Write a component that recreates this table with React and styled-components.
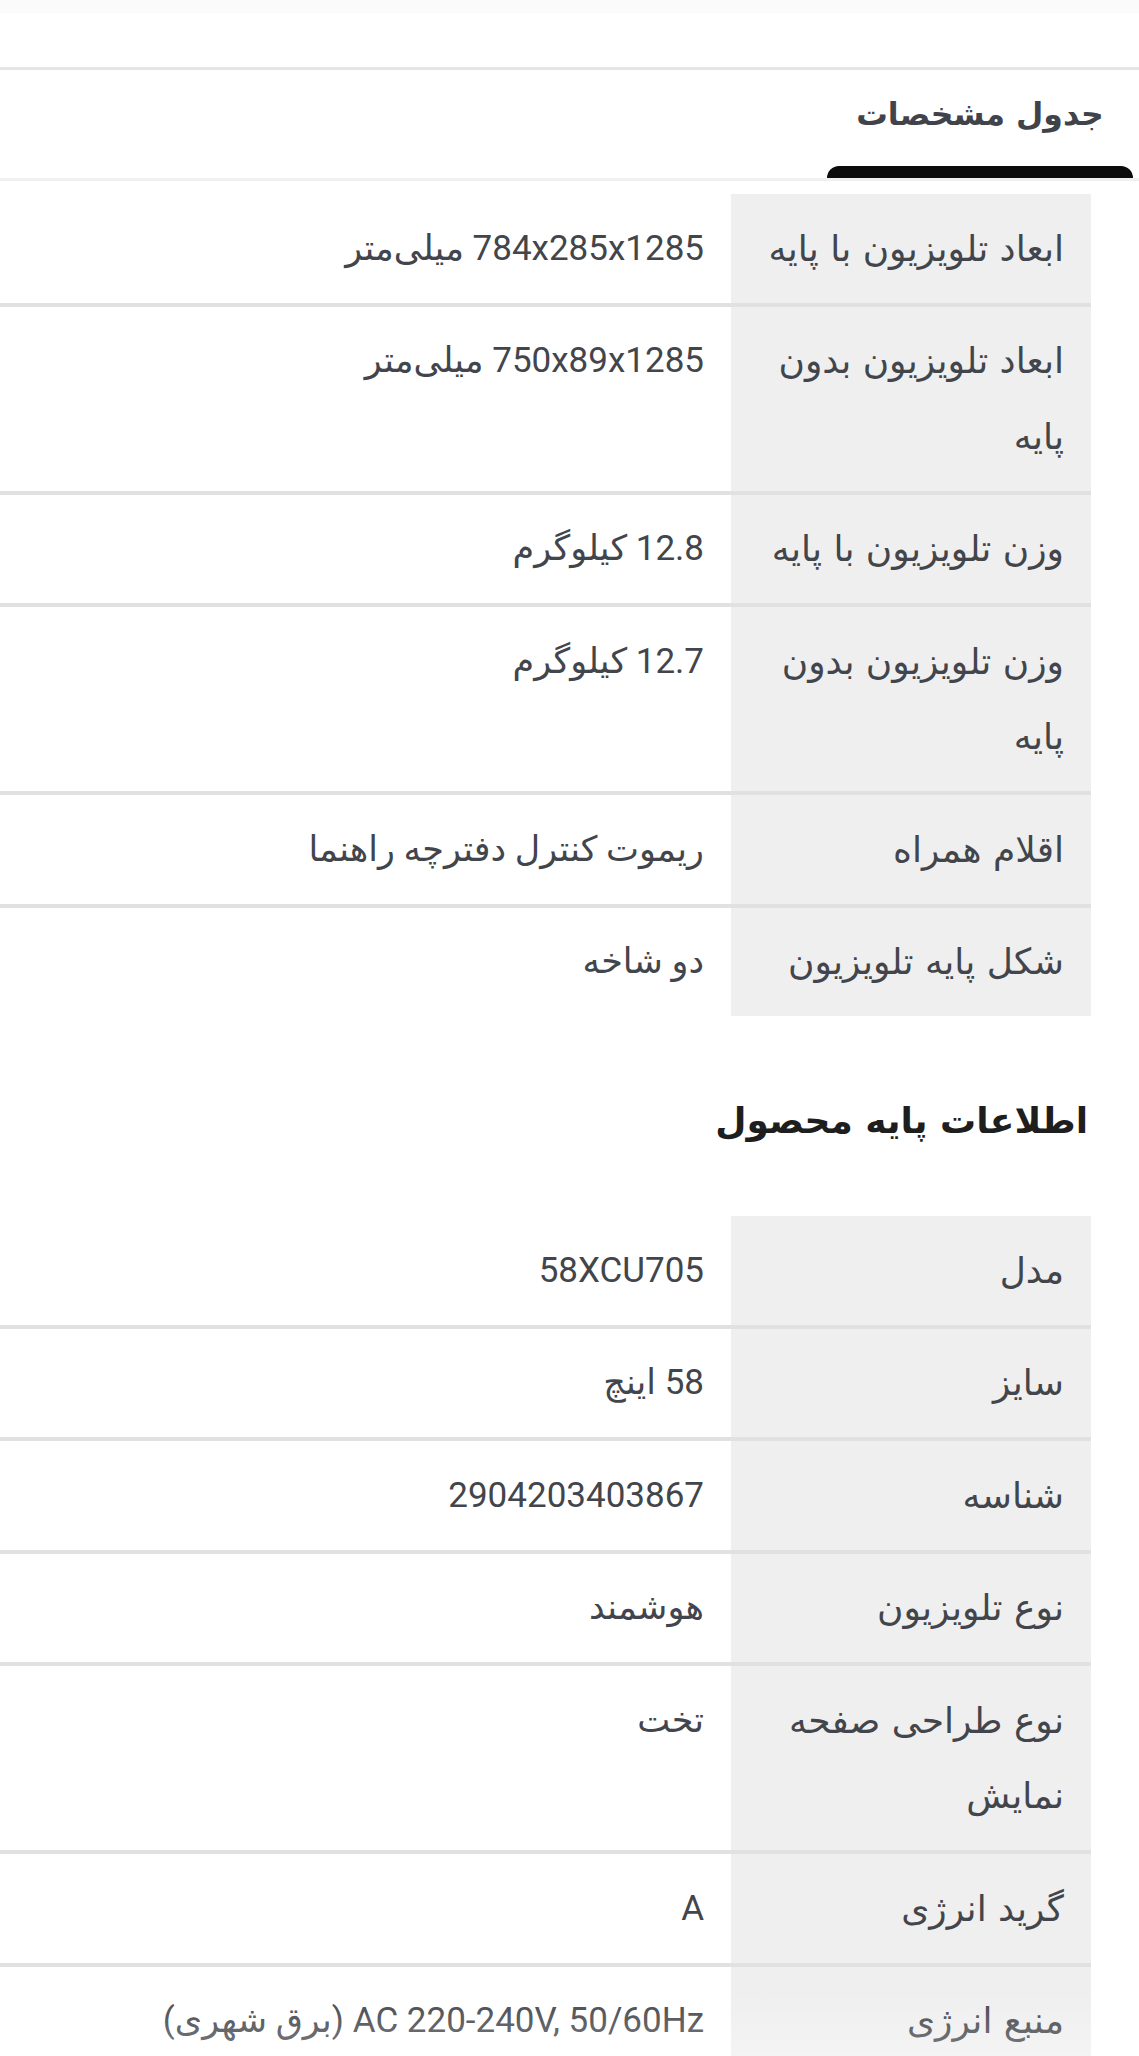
import React from 'react'
import styled, { createGlobalStyle } from 'styled-components'

const GlobalStyle = createGlobalStyle`
  html, body {
    margin: 0;
    padding: 0;
    background: #ffffff;
  }
  body {
    font-family: Roboto, "DejaVu Sans", sans-serif;
  }
`;

const Page = styled.div`
  direction: rtl;
  position: relative;
  min-height: 2056px;
  overflow: hidden;
  background: #fff;
`;

const TopStrip = styled.div`
  height: 13px;
  background: #fbfbfb;
`;

const TabBar = styled.div`
  margin-top: 54px;
  border-top: 3px solid #e5e5e5;
  border-bottom: 3px solid #f0f0f0;
  height: 108px;
  display: flex;
  align-items: flex-end;
`;

const Tab = styled.div`
  width: 306px;
  margin-right: 6px;
  display: flex;
  flex-direction: column;
  align-items: center;
`;

const TabLabel = styled.div`
  font-family: "DejaVu Sans", sans-serif;
  font-weight: bold;
  font-size: 31.5px;
  color: #40434a;
  line-height: 60px;
  margin-bottom: 22px;
`;

const TabIndicator = styled.div`
  width: 100%;
  height: 12px;
  background: #0c0c0c;
  border-radius: 12px 12px 0 0;
`;

const Content = styled.div`
  padding: 13px 48px 0 0;
`;

const Table = styled.div`
  display: flex;
  flex-direction: column;
`;

const Row = styled.div`
  display: grid;
  grid-template-columns: 360px 1fr;
  border-top: ${p => (p.$first ? 'none' : '4px solid #e1e1e1')};
`;

const Cell = styled.div`
  padding: 16.5px 27px;
  line-height: 75.5px;
  font-size: 35px;
  color: #42454b;
  background: #ffffff;
  font-family: Roboto, "DejaVu Sans", sans-serif;
  text-align: right;
`;

const LabelCell = styled(Cell)`
  padding-left: 16px;
  font-size: 36px;
  background: #efefef;
  font-family: "DejaVu Sans", sans-serif;
`;

const Heading = styled.h2`
  margin: 75px 3px 65px 0;
  font-family: "DejaVu Sans", sans-serif;
  font-weight: bold;
  font-size: 36px;
  line-height: 60px;
  color: #1e1e1e;
`;

const BottomFade = styled.div`
  position: absolute;
  left: 0;
  right: 0;
  top: 1990px;
  height: 66px;
  background: linear-gradient(to bottom, rgba(255, 255, 255, 0), rgba(255, 255, 255, 0.3));
  pointer-events: none;
`;

const specs = [
  ['ابعاد تلویزیون با پایه', '784x285x1285 میلی‌متر'],
  ['ابعاد تلویزیون بدون پایه', '750x89x1285 میلی‌متر'],
  ['وزن تلویزیون با پایه', '12.8 کیلوگرم'],
  ['وزن تلویزیون بدون پایه', '12.7 کیلوگرم'],
  ['اقلام همراه', 'ریموت کنترل دفترچه راهنما'],
  ['شکل پایه تلویزیون', 'دو شاخه'],
];

const basics = [
  ['مدل', '58XCU705'],
  ['سایز', '58 اینچ'],
  ['شناسه', '2904203403867'],
  ['نوع تلویزیون', 'هوشمند'],
  ['نوع طراحی صفحه نمایش', 'تخت'],
  ['گرید انرژی', 'A'],
  ['منبع انرژی', 'AC 220-240V, 50/60Hz (برق شهری)'],
];

const SpecTable = ({ rows }) => (
  <Table>
    {rows.map(([label, value], i) => (
      <Row key={label} $first={i === 0}>
        <LabelCell>{label}</LabelCell>
        <Cell>{value}</Cell>
      </Row>
    ))}
  </Table>
);

export default function App() {
  return (
    <>
      <GlobalStyle />
      <Page>
        <TopStrip />
        <TabBar>
          <Tab>
            <TabLabel>جدول مشخصات</TabLabel>
            <TabIndicator />
          </Tab>
        </TabBar>
        <Content>
          <SpecTable rows={specs} />
          <Heading>اطلاعات پایه محصول</Heading>
          <SpecTable rows={basics} />
        </Content>
        <BottomFade />
      </Page>
    </>
  );
}
